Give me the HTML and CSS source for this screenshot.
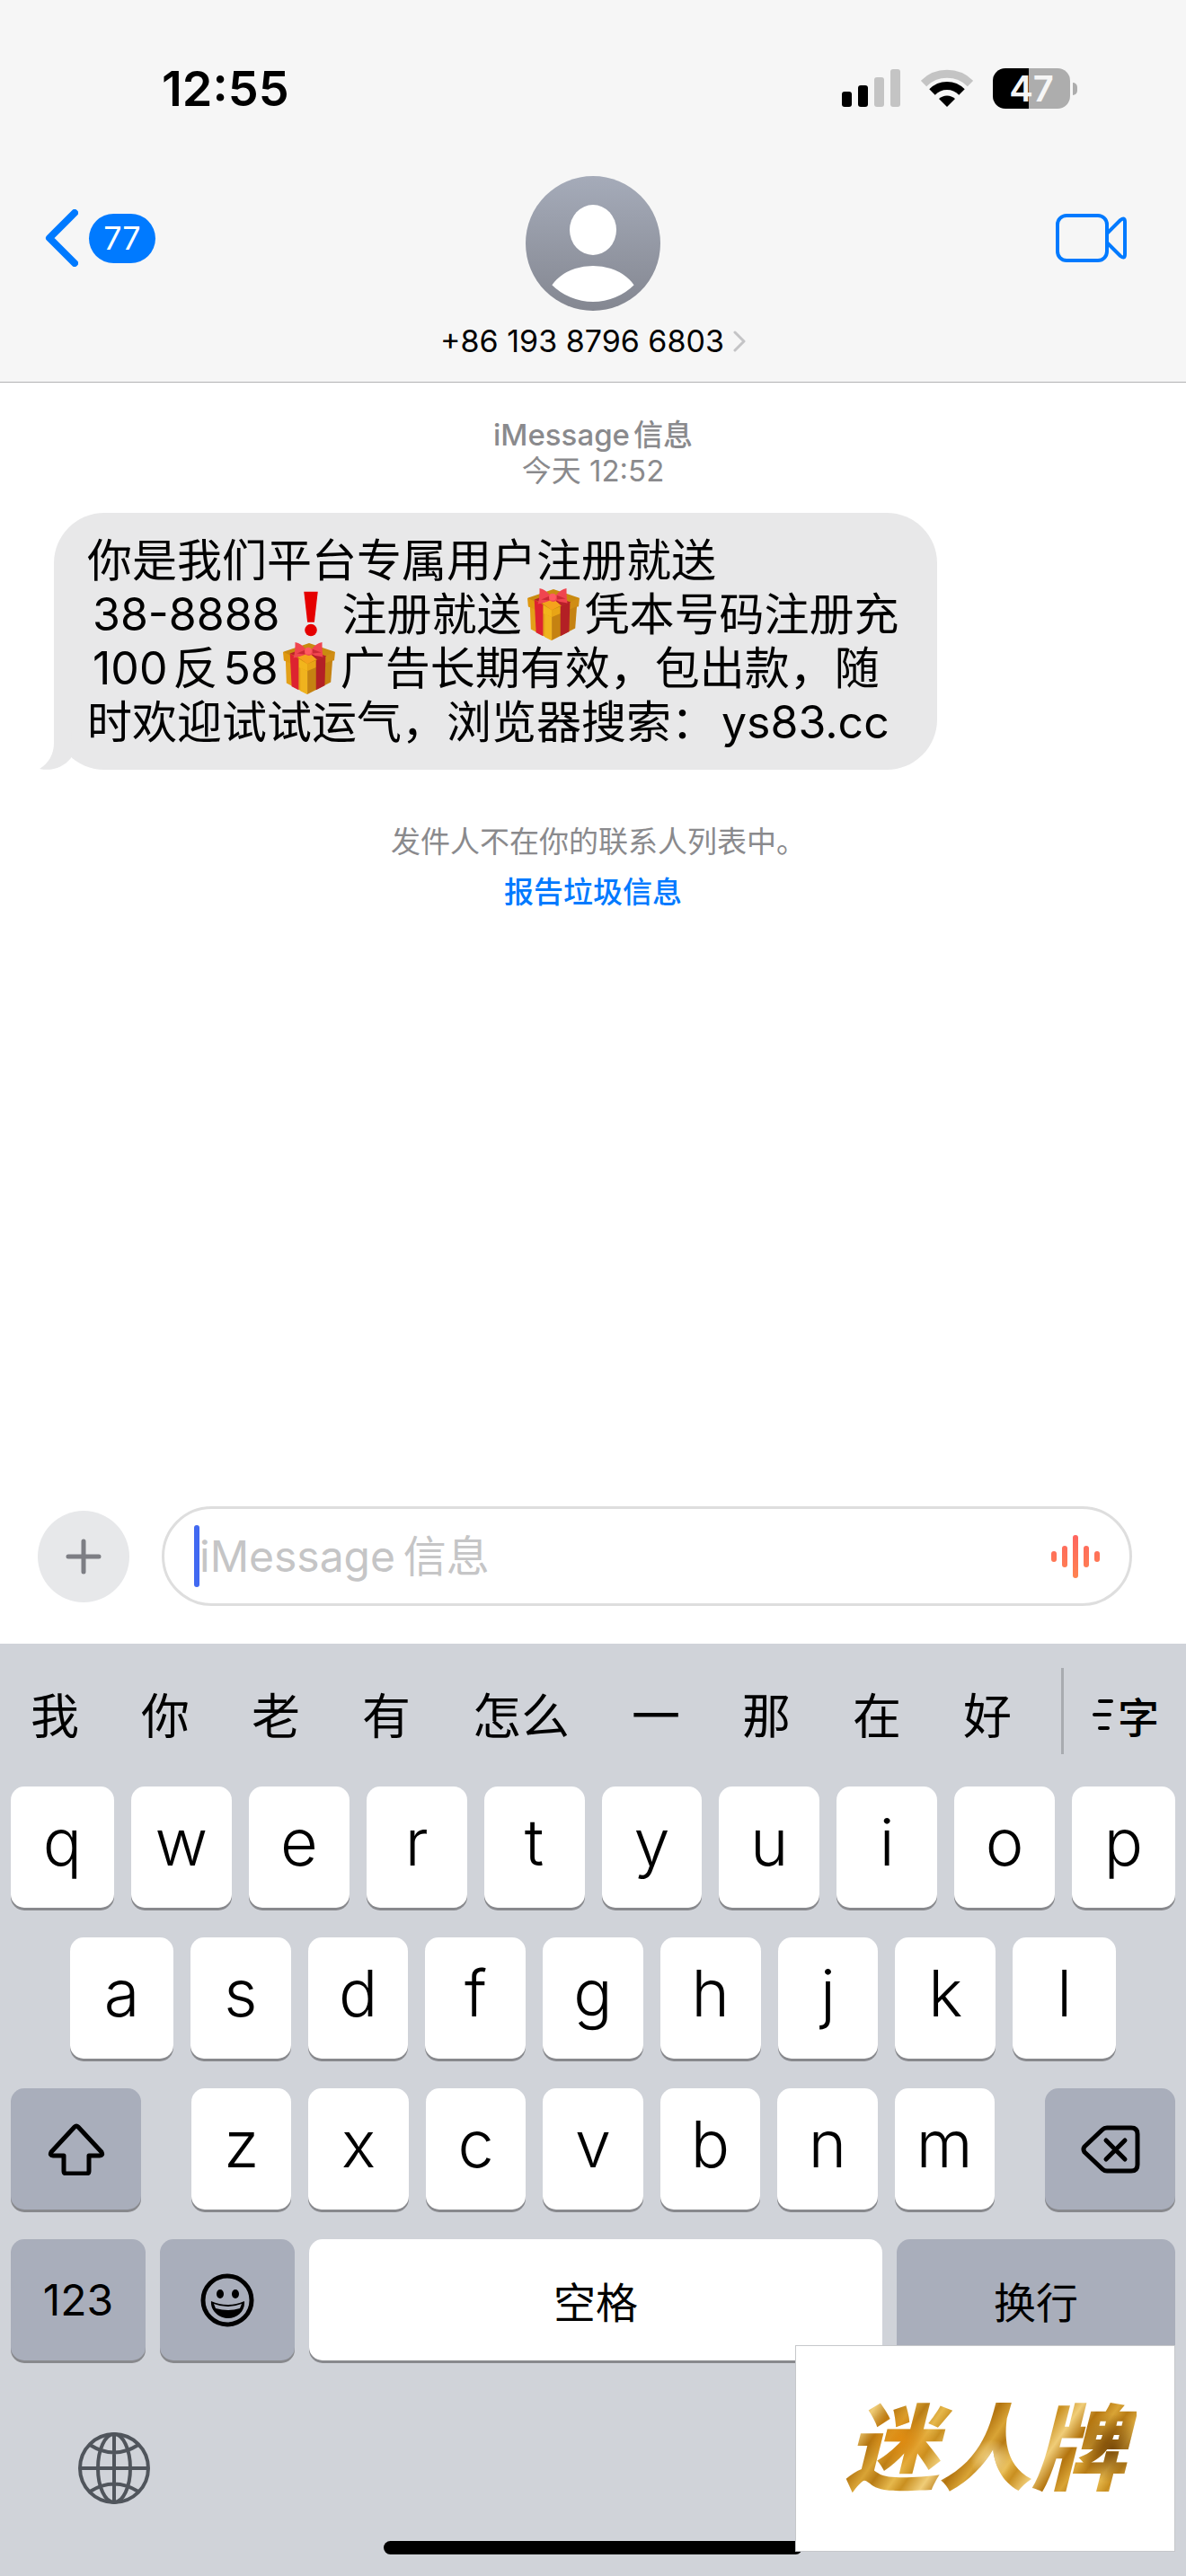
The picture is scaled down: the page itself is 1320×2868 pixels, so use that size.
FILE: index.html
```html
<!DOCTYPE html>
<html lang="zh-CN">
<head>
    <meta charset="UTF-8">
    <meta name="viewport" content="width=device-width, initial-scale=1.0">
    <title>信息</title>
    <link rel="stylesheet" href="styles.css">
</head>
<body>
    <!-- 渐变和重复使用的图形 -->
    <svg class="defs" aria-hidden="true">
        <defs>
            <linearGradient id="avatar-bg" x1="0" y1="0" x2="0" y2="1">
                <stop offset="0" stop-color="#a5abb9"/>
                <stop offset="1" stop-color="#848791"/>
            </linearGradient>
            <clipPath id="avatar-clip"><circle cx="75" cy="75" r="65"/></clipPath>
            <linearGradient id="wave" x1="0" y1="0" x2="0" y2="48" gradientUnits="userSpaceOnUse">
                <stop offset="0" stop-color="#ff655f"/>
                <stop offset="1" stop-color="#ff8350"/>
            </linearGradient>
            <symbol id="gift" viewBox="0 0 60 62">
                <path fill="#c98a10" d="M1 12L30 2l29 10v10L28 28 1 22z"/>
                <path fill="#e3a018" d="M3 22l25 7v32L4 48z"/>
                <path fill="#c58211" d="M28 29l29-8-2 26-27 14z"/>
                <path fill="#f0b31e" d="M20 27l8 2v32l-8-4z"/>
                <path fill="#e0980f" d="M0 12l28 14v8L1 22z"/>
                <path fill="#f2b51c" d="M18 20l10 6v8l-10-4z"/>
                <path fill="#d08d14" d="M28 26l32-14-1 9-31 13z"/>
                <path fill="#e8a516" d="M28 26l10-4v8l-10 4z"/>
                <path fill="#f5a21c" d="M17 18l12-5 11 7-12 6z"/>
                <path fill="#dd2330" d="M8 14l10 6v36l-8-4z"/>
                <path fill="#b32025" d="M38 22l11-5-1 34-10 5z"/>
                <path fill="#b8202a" d="M8 14l14-5 4 3-9 6zM35 12l15 5-10 5-8-7z"/>
                <path fill="#f0454f" d="M14 1c5 1 9 4 12 8 3-1 5-1 7 0 3-4 7-7 12-8 0 5 0 10 1 17-5-1-9-1-12-3-3 2-6 2-8 0-4 2-9 3-14 4 2-6 2-12 2-18z"/>
                <path fill="#cc2a36" d="M16 14l9-4v5zM44 13l-10-4v5z"/>
                <circle fill="#ff5a60" cx="29" cy="11" r="4"/>
            </symbol>
        </defs>
    </svg>

    <header class="header">
        <div class="status-bar">
            <span class="time">12:55</span>
            <div class="status-icons">
                <svg width="66" height="42" viewBox="0 0 66 42">
                    <rect x="0" y="25" width="11" height="17" rx="3"/>
                    <rect x="18" y="18" width="11" height="24" rx="3"/>
                    <rect x="36" y="9" width="11" height="33" rx="3" fill="#c4c4c4"/>
                    <rect x="54" y="0" width="11" height="42" rx="3" fill="#c4c4c4"/>
                </svg>
                <svg width="58" height="42" viewBox="0 0 58 42" fill="none" stroke-width="9">
                    <path stroke="#c4c4c4" d="M3 16a37 37 0 0 1 52 0"/>
                    <path stroke="#000" d="M12.500 25.500a23 23 0 0 1 33 0"/>
                    <path fill="#000" d="M29 42l-9-9a13 13 0 0 1 18 0z"/>
                </svg>
                <div class="battery"><span class="battery-level">47</span></div>
            </div>
        </div>
        <nav class="nav">
            <button class="nav-side back-button" aria-label="返回">
                <svg width="37" height="64" viewBox="0 0 37 64">
                    <path fill="none" stroke="#007aff" stroke-width="8" stroke-linecap="round" stroke-linejoin="round" d="M33 4L5 32l28 28"/>
                </svg>
                <span class="unread">77</span>
            </button>
            <button class="contact">
                <svg width="150" height="150" viewBox="0 0 150 150">
                    <circle cx="75" cy="75" r="75" fill="url(#avatar-bg)"/>
                    <ellipse cx="75" cy="60" rx="26" ry="28" fill="#fff"/>
                    <ellipse cx="75" cy="141" rx="52" ry="41" fill="#fff" clip-path="url(#avatar-clip)"/>
                </svg>
                <span class="contact-name">
                    +86 193 8796 6803
                    <svg width="14" height="24" viewBox="0 0 14 24">
                        <path fill="none" stroke="#c4c4c6" stroke-width="3" stroke-linecap="round" stroke-linejoin="round" d="M2 2l10 10L2 22"/>
                    </svg>
                </span>
            </button>
            <button class="nav-side video-button" aria-label="视频通话">
                <svg width="80" height="54" viewBox="0 0 80 54" fill="none" stroke="#007aff" stroke-width="4" stroke-linejoin="round">
                    <rect x="2" y="2" width="55" height="50" rx="10"/>
                    <path d="M57 22L72 7q5-4 5 2v36q0 6-5 2L57 32"/>
                </svg>
            </button>
        </nav>
    </header>

    <main class="thread">
        <p class="meta"><b>iMessage<span class="gap">信息</span></b><br>今天 12:52</p>

        <div class="bubble">
            <p>你是我们平台专属用户注册就送</p>
            <p><span class="latin">38-8888</span><svg class="emoji" viewBox="0 0 60 62"><path fill="#e50000" d="M22 5h16l-4 35h-8z"/><circle fill="#e50000" cx="30" cy="49" r="7"/></svg>注册就送<svg class="emoji"><use href="#gift"/></svg>凭本号码注册充</p>
            <p><span class="latin">100</span>反<span class="latin">58</span><svg class="emoji"><use href="#gift"/></svg>广告长期有效，包出款，随</p>
            <p>时欢迎试试运气，浏览器搜索：<span class="latin">ys83.cc</span></p>
            <svg class="tail" width="36" height="60" viewBox="0 0 36 60">
                <path fill="#e8e8e9" d="M16 0v30c0 13-6 23-16 29 14 3 27-2 35-12L36 0z"/>
            </svg>
        </div>

        <p class="notice">发件人不在你的联系人列表中。</p>
        <a href="#" class="report-link">报告垃圾信息</a>
    </main>

    <!-- 输入栏 -->
    <form class="composer">
        <button type="button" class="plus-button" aria-label="添加">
            <svg width="40" height="40" viewBox="0 0 40 40">
                <path stroke="#7d7e84" stroke-width="5" stroke-linecap="round" d="M20 3v34M3 20h34"/>
            </svg>
        </button>
        <div class="field">
            <span class="caret"></span>
            <input type="text" class="message-input" aria-label="iMessage信息" placeholder="iMessage&thinsp;信息">
            <button type="button" class="audio-button" aria-label="录音">
                <svg width="56" height="48" viewBox="0 0 56 48" fill="url(#wave)">
                    <rect x="0" y="18" width="6" height="12" rx="3"/>
                    <rect x="12" y="12" width="6" height="24" rx="3"/>
                    <rect x="24" y="0" width="6" height="48" rx="3"/>
                    <rect x="36" y="12" width="6" height="24" rx="3"/>
                    <rect x="48" y="18" width="6" height="12" rx="3"/>
                </svg>
            </button>
        </div>
    </form>

    <!-- 键盘 -->
    <section class="keyboard">
        <div class="candidates">
            <div class="candidate-list">
                <button>我</button>
                <button>你</button>
                <button>老</button>
                <button>有</button>
                <button>怎么</button>
                <button>一</button>
                <button>那</button>
                <button>在</button>
                <button>好</button>
            </div>
            <button class="more-button">
                <svg width="26" height="36" viewBox="0 0 26 36">
                    <path stroke="#000" stroke-width="4" stroke-linecap="round" d="M9 3h13M3 18h17M9 33h9"/>
                </svg>
                字
            </button>
        </div>

        <div class="key-row">
            <button class="key key-edge">q</button>
            <button class="key">w</button>
            <button class="key">e</button>
            <button class="key">r</button>
            <button class="key">t</button>
            <button class="key">y</button>
            <button class="key">u</button>
            <button class="key">i</button>
            <button class="key">o</button>
            <button class="key key-edge">p</button>
        </div>
        <div class="key-row key-row-inset">
            <button class="key key-edge">a</button>
            <button class="key">s</button>
            <button class="key">d</button>
            <button class="key">f</button>
            <button class="key">g</button>
            <button class="key">h</button>
            <button class="key">j</button>
            <button class="key">k</button>
            <button class="key key-edge">l</button>
        </div>
        <div class="key-row key-row-split">
            <button class="key key-gray key-shift" aria-label="shift">
                <svg width="64" height="58" viewBox="0 0 64 58">
                    <path fill="none" stroke="#000" stroke-width="5" stroke-linejoin="round" d="M30 4q2-2 4 0l26 28q2 4-2 4H46v17q0 3-3 3H21q-3 0-3-3V36H6q-4 0-2-4z"/>
                </svg>
            </button>
            <div class="key-group">
                <button class="key">z</button>
                <button class="key">x</button>
                <button class="key">c</button>
                <button class="key">v</button>
                <button class="key">b</button>
                <button class="key">n</button>
                <button class="key">m</button>
            </div>
            <button class="key key-gray key-shift" aria-label="删除">
                <svg width="66" height="54" viewBox="0 0 66 54" fill="none" stroke="#000" stroke-width="5" stroke-linecap="round" stroke-linejoin="round">
                    <path d="M29 3h27q7 0 7 7v34q0 7-7 7H29q-3 0-5-2L4 30q-2-3 0-6L24 5q2-2 5-2z"/>
                    <path d="M28 17l21 21M49 17L28 38"/>
                </svg>
            </button>
        </div>
        <div class="key-row key-row-bottom">
            <button class="key key-gray key-small">123</button>
            <button class="key key-gray key-small" aria-label="表情">
                <svg width="60" height="60" viewBox="0 0 60 60">
                    <circle cx="30" cy="30" r="27" fill="none" stroke="#000" stroke-width="5"/>
                    <ellipse cx="22" cy="23" rx="4" ry="5"/>
                    <ellipse cx="39" cy="23" rx="4" ry="5"/>
                    <path d="M12 31q18 8 37 0c1 11-8 19-18 19S11 42 12 31z"/>
                    <path fill="#a9aebb" d="M15 34q15 6 31 0l-2 5q-13 4-27 0z"/>
                </svg>
            </button>
            <button class="key key-space">空格</button>
            <button class="key key-gray key-return">换行</button>
        </div>

        <div class="keyboard-footer">
            <button class="globe-button" aria-label="切换输入法">
                <svg width="80" height="80" viewBox="0 0 80 80" fill="none" stroke="#50555c" stroke-width="4">
                    <circle cx="40" cy="40" r="38"/>
                    <ellipse cx="40" cy="40" rx="18" ry="38"/>
                    <path d="M40 2v76M2 40h76M13 14q27 17 54 0M13 66q27-17 54 0"/>
                </svg>
            </button>
        </div>
        <div class="home-indicator"></div>
        <div class="watermark"><span>迷人牌</span></div>
    </section>
</body>
</html>
```

FILE: styles.css
```css
* {
    margin: 0;
    padding: 0;
    box-sizing: border-box;
    font-family: Inter, "Noto Sans CJK SC", sans-serif;
}

body {
    background: #fff;
    color: #000;
    min-height: 100vh;
    display: flex;
    flex-direction: column;
}

button {
    border: none;
    background: none;
    color: inherit;
    cursor: pointer;
}

svg {
    display: block;
    flex: none;
}

.defs {
    position: absolute;
    width: 0;
    height: 0;
}

/* 顶部 */
.header {
    background: #f6f6f6;
    border-bottom: 1px solid #b2b2b3;
}

.status-bar {
    height: 196px;
    padding: 0 122px 0 180px;
    display: flex;
    align-items: center;
    justify-content: space-between;
}

.time {
    font-size: 54px;
    font-weight: 600;
}

.status-icons {
    display: flex;
    align-items: center;
    gap: 22px;
}

.battery {
    position: relative;
    width: 86px;
    height: 45px;
    margin-right: 7px;
    border-radius: 14px;
    background: linear-gradient(to right, #000 47%, #adadad 47%);
    color: #f6f6f6;
    text-align: center;
}

.battery::after {
    content: "";
    position: absolute;
    right: -8px;
    top: 16px;
    width: 5px;
    height: 14px;
    border-radius: 0 5px 5px 0;
    background: #adadad;
}

.battery-level {
    font-size: 40px;
    line-height: 45px;
    font-weight: 600;
}

.nav {
    display: grid;
    grid-template-columns: 1fr auto 1fr;
    align-items: start;
}

.nav-side {
    display: flex;
    align-items: center;
    height: 138px;
}

.back-button {
    justify-self: start;
    gap: 12px;
    padding-left: 50px;
}

.video-button {
    justify-self: end;
    padding-right: 65px;
}

.unread {
    min-width: 74px;
    padding: 0 14px;
    border-radius: 28px;
    background: #007aff;
    color: #fff;
    font-size: 36px;
    line-height: 55px;
    text-align: center;
}

.contact {
    display: flex;
    flex-direction: column;
    align-items: center;
    gap: 14px;
    padding-bottom: 25px;
}

.contact-name {
    display: flex;
    align-items: center;
    gap: 10px;
    font-size: 34px;
    line-height: 40px;
}

/* 对话 */
.thread {
    flex: 1;
    display: flex;
    flex-direction: column;
    align-items: center;
    padding: 38px 60px 0;
}

.meta {
    color: #8a8a8d;
    font-size: 33px;
    line-height: 40px;
    text-align: center;
    margin-bottom: 27px;
}

.meta b {
    font-weight: 500;
}

.gap {
    margin-left: 4px;
}

.bubble {
    position: relative;
    align-self: flex-start;
    padding: 23px 42px 23px 37px;
    border-radius: 56px;
    background: #e8e8e9;
    font-size: 50px;
    line-height: 60px;
}

.latin {
    margin: 0 6px;
}

.emoji {
    display: inline-block;
    width: 60px;
    height: 60px;
    margin: 0 5px;
    vertical-align: -12px;
}

.latin + .emoji {
    margin-left: -2px;
}

.tail {
    position: absolute;
    left: -16px;
    bottom: 0;
}

.notice {
    margin: 60px 0 16px;
    padding-left: 12px;
    color: #8a8a8d;
    font-size: 33px;
    line-height: 40px;
}

.report-link {
    color: #007aff;
    font-size: 33px;
    line-height: 40px;
    font-weight: 500;
    text-decoration: none;
}

/* 输入栏 */
.composer {
    display: flex;
    align-items: center;
    gap: 36px;
    padding: 0 60px 42px 42px;
}

.plus-button {
    display: flex;
    align-items: center;
    justify-content: center;
    width: 102px;
    height: 102px;
    border-radius: 50%;
    background: #e7e8ea;
}

.field {
    flex: 1;
    min-width: 0;
    display: flex;
    align-items: center;
    height: 111px;
    padding: 0 31px 0 33px;
    border: 3px solid #dedede;
    border-radius: 56px;
}

.caret {
    width: 6px;
    height: 69px;
    border-radius: 3px;
    background: #4169f1;
}

.message-input {
    flex: 1;
    min-width: 0;
    border: none;
    outline: none;
    background: none;
    font-size: 48px;
    line-height: 60px;
}

.message-input::placeholder {
    color: #c5c5c6;
}

/* 键盘 */
.keyboard {
    position: relative;
    background: #d0d3d9;
    padding: 0 12px 24px;
}

.candidates {
    display: flex;
    align-items: center;
    height: 150px;
    margin-bottom: 9px;
}

.candidate-list {
    flex: 1;
    display: flex;
    gap: 69px;
    padding: 14px 0 0 22px;
}

.candidate-list button {
    font-size: 54px;
    line-height: 72px;
}

.more-button {
    display: flex;
    align-items: center;
    gap: 3px;
    height: 96px;
    padding: 8px 18px 0 31px;
    border-left: 3px solid #a8abb0;
    font-size: 46px;
    font-weight: 500;
}

.key-row {
    display: flex;
    gap: 19px;
    margin-bottom: 33px;
}

.key-row-inset {
    padding: 0 66px;
}

.key-row-split {
    gap: 56px;
}

.key-row-bottom {
    gap: 16px;
}

.key-group {
    flex: 1;
    display: flex;
    gap: 19px;
}

.key {
    flex: 1;
    min-width: 0;
    display: flex;
    align-items: center;
    justify-content: center;
    height: 135px;
    padding-bottom: 12px;
    border-radius: 15px;
    background: #fff;
    box-shadow: 0 3px 0 #88898d;
    font-size: 72px;
    font-weight: 300;
    line-height: 90px;
}

.key-edge {
    flex: 0 0 115px;
}

.key-gray {
    background: #a9aebb;
    padding-bottom: 0;
}

.key-shift {
    flex: 0 0 145px;
}

.key-small {
    flex: 0 0 150px;
    font-size: 48px;
    font-weight: 400;
}

.key-space,
.key-return {
    padding: 6px 0 0;
    font-size: 47px;
    font-weight: 400;
}

.key-return {
    flex: 0 0 310px;
}

.keyboard-footer {
    height: 168px;
    padding: 47px 75px 0;
}

.home-indicator {
    width: 36%;
    height: 15px;
    margin: 0 auto;
    border-radius: 8px;
    background: #000;
}

/* 右下角水印 */
.watermark {
    position: absolute;
    right: 12px;
    bottom: 27px;
    display: flex;
    align-items: center;
    justify-content: center;
    width: 423px;
    height: 230px;
    border: 1px solid #c6c8cb;
    background: #fff;
}

.watermark span {
    padding: 0 12px;
    background:
        radial-gradient(circle at 22% 42%, #e08c12 0, transparent 14%),
        radial-gradient(circle at 52% 60%, #f5dc98 0, transparent 12%),
        radial-gradient(circle at 92% 50%, #7a4a08 0, transparent 12%),
        repeating-linear-gradient(125deg, #b87c16 0, #e6b84c 18px, #c98f20 30px, #f0cd78 48px, #b3740f 66px, #d9a436 82px, #b87c16 94px);
    -webkit-background-clip: text;
    background-clip: text;
    color: transparent;
    font-size: 104px;
    font-weight: 900;
    font-style: italic;
    line-height: 130px;
}
```
